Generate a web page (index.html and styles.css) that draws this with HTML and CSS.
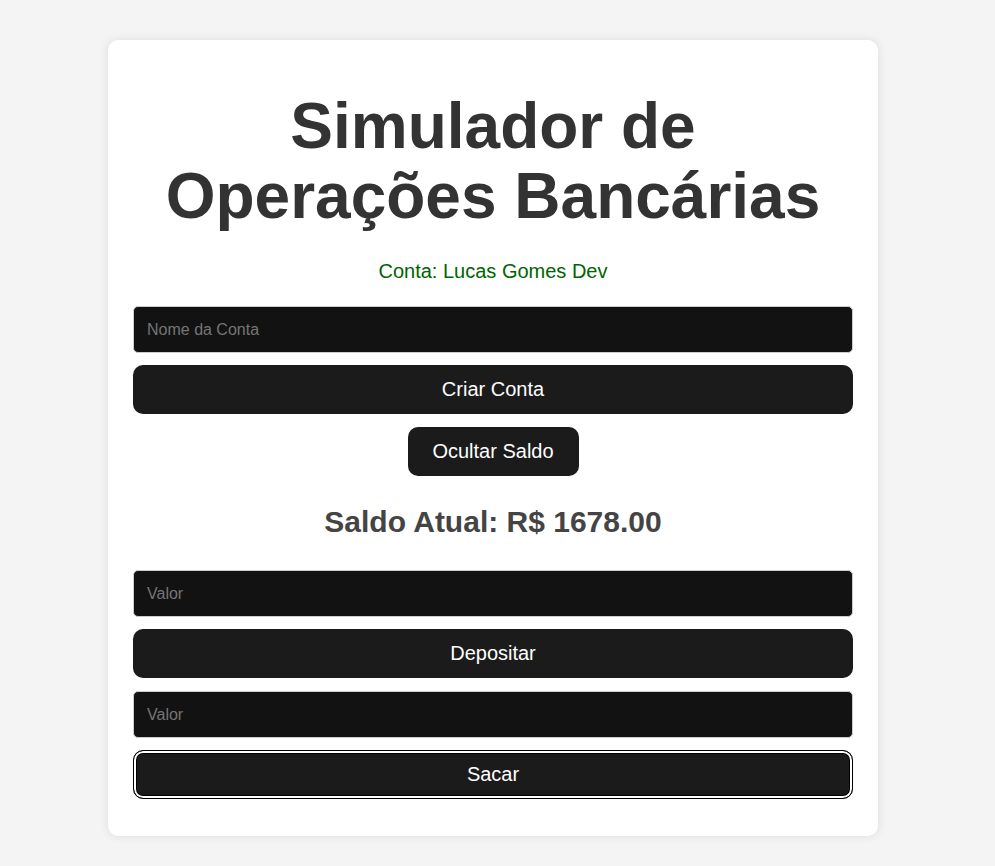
FILE: index.html
```html
<!DOCTYPE html>
<html lang="pt-BR">
<head>
<meta charset="utf-8">
<title>Simulador de Operações Bancárias</title>
<link rel="stylesheet" href="styles.css">
</head>
<body>
<main class="card">
  <h1 class="title">Simulador de Operações Bancárias</h1>
  <p class="account">Conta: Lucas Gomes Dev</p>
  <input class="field" type="text" placeholder="Nome da Conta">
  <button class="btn btn-full">Criar Conta</button>
  <div class="toggle-row"><button class="btn btn-small">Ocultar Saldo</button></div>
  <h2 class="balance">Saldo Atual: R$ 1678.00</h2>
  <input class="field" type="number" placeholder="Valor">
  <button class="btn btn-full">Depositar</button>
  <input class="field" type="number" placeholder="Valor">
  <button class="btn btn-full btn-focus">Sacar</button>
</main>
</body>
</html>
```
FILE: styles.css
```css
html, body {
  margin: 0;
  padding: 0;
}
body {
  background: #f4f4f4;
  font-family: "Liberation Sans", Arial, sans-serif;
  display: flex;
  justify-content: center;
  padding: 40px 9px 30px 0;
}
.card {
  width: 770px;
  box-sizing: border-box;
  background: #fff;
  border-radius: 10px;
  box-shadow: 0 0 10px rgba(0, 0, 0, 0.1);
  padding: 51px 25px 37px;
  display: flex;
  flex-direction: column;
}
.title {
  margin: 0;
  font-size: 64px;
  line-height: 70px;
  font-weight: bold;
  color: #333;
  text-align: center;
}
.account {
  margin: 29px 0 23px;
  font-size: 20px;
  line-height: 23px;
  color: #006400;
  text-align: center;
}
.field {
  box-sizing: border-box;
  width: 100%;
  height: 47px;
  padding: 0 13px;
  border: 1px solid #ccc;
  border-radius: 5px;
  background: #121212;
  color: #fff;
  font-family: "Liberation Sans", Arial, sans-serif;
  font-size: 16px;
  margin: 0 0 12px;
  outline: none;
}
.field::placeholder {
  color: #757575;
}
.btn {
  box-sizing: border-box;
  height: 49px;
  border: none;
  border-radius: 10px;
  background: #1b1b1b;
  color: #fff;
  font-family: "Liberation Sans", Arial, sans-serif;
  font-size: 20px;
  cursor: pointer;
}
.btn-full {
  width: 100%;
  margin: 0 0 13px;
}
.toggle-row {
  display: flex;
  justify-content: center;
}
.btn-small {
  width: 171px;
}
.balance {
  margin: 29px 0 31px;
  font-size: 30px;
  line-height: 34px;
  color: #444;
  text-align: center;
}
.btn-focus {
  margin-bottom: 0;
  border: 1px solid #000;
  box-shadow: inset 0 0 0 2px #fff, inset 0 0 0 3px #000;
}
```
